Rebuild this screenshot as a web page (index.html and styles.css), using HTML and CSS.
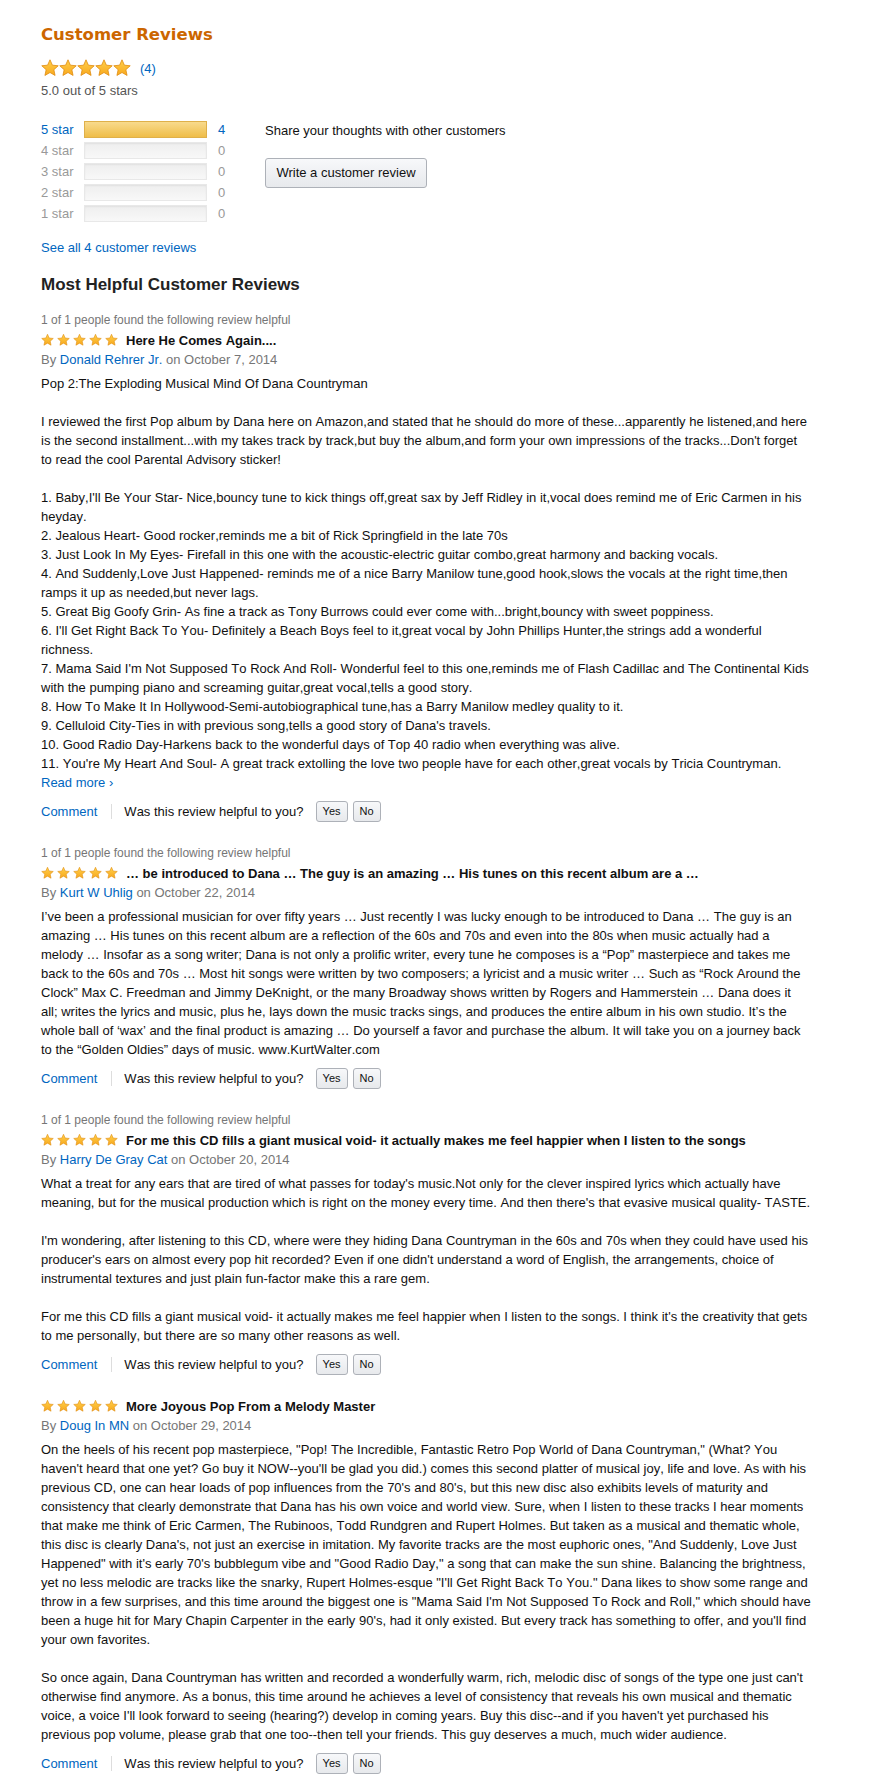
FILE: index.html
```html
<!DOCTYPE html>
<html lang="en">
<head>
  <meta charset="UTF-8">
  <meta name="viewport" content="width=device-width, initial-scale=1.0">
  <title>Customer Reviews</title>
  <link rel="stylesheet" href="styles.css">
</head>
<body>
  <svg class="sprite" xmlns="http://www.w3.org/2000/svg">
    <defs>
      <linearGradient id="star-fill" x1="0" y1="0" x2="0" y2="1">
        <stop offset="0" stop-color="#ffd04a"/>
        <stop offset="1" stop-color="#f8a81e"/>
      </linearGradient>
    </defs>
    <symbol id="star" viewBox="0 0 20 19">
      <path d="M10 0.4 L12.65 6.36 L19.13 7.03 L14.28 11.39 L15.64 17.77 L10 14.5 L4.36 17.77 L5.72 11.39 L0.87 7.03 L7.35 6.36 Z" fill="url(#star-fill)" stroke="#e08c10" stroke-width="0.9" stroke-linejoin="round"/>
    </symbol>
  </svg>

  <div class="page">
    <!-- summary -->
    <h2 class="cr-title">Customer Reviews</h2>
    <div class="avg-stars">
      <svg class="stars-big" viewBox="0 0 90 18">
        <use href="#star" x="0" y="0" width="18" height="18"/>
        <use href="#star" x="18" y="0" width="18" height="18"/>
        <use href="#star" x="36" y="0" width="18" height="18"/>
        <use href="#star" x="54" y="0" width="18" height="18"/>
        <use href="#star" x="72" y="0" width="18" height="18"/>
      </svg>
      <a href="#" class="link">(4)</a>
    </div>
    <div class="avg-text">5.0 out of 5 stars</div>

    <div class="summary">
      <div class="histogram">
        <div class="hist-row">
          <a href="#" class="link hist-label">5 star</a>
          <div class="hist-bar full"></div>
          <a href="#" class="link hist-count">4</a>
        </div>
        <div class="hist-row empty">
          <span class="hist-label">4 star</span>
          <div class="hist-bar"></div>
          <span class="hist-count">0</span>
        </div>
        <div class="hist-row empty">
          <span class="hist-label">3 star</span>
          <div class="hist-bar"></div>
          <span class="hist-count">0</span>
        </div>
        <div class="hist-row empty">
          <span class="hist-label">2 star</span>
          <div class="hist-bar"></div>
          <span class="hist-count">0</span>
        </div>
        <div class="hist-row empty">
          <span class="hist-label">1 star</span>
          <div class="hist-bar"></div>
          <span class="hist-count">0</span>
        </div>
      </div>
      <div class="share">
        <div class="share-text">Share your thoughts with other customers</div>
        <button class="write-btn">Write a customer review</button>
      </div>
    </div>
    <a href="#" class="link see-all">See all 4 customer reviews</a>

    <!-- reviews -->
    <h3 class="reviews-title">Most Helpful Customer Reviews</h3>

    <div class="review">
      <div class="review-helpful">1 of 1 people found the following review helpful</div>
      <div class="review-head">
        <svg class="stars-small" viewBox="0 0 77 12">
          <use href="#star" x="0" width="13" height="12"/>
          <use href="#star" x="16" width="13" height="12"/>
          <use href="#star" x="32" width="13" height="12"/>
          <use href="#star" x="48" width="13" height="12"/>
          <use href="#star" x="64" width="13" height="12"/>
        </svg>
        <span class="review-title">Here He Comes Again....</span>
      </div>
      <div class="review-by">By <a href="#" class="link">Donald Rehrer Jr.</a> on October 7, 2014</div>
      <div class="review-body">Pop 2:The Exploding Musical Mind Of Dana Countryman<br><br>I reviewed the first Pop album by Dana here on Amazon,and stated that he should do more of these...apparently he listened,and here is the second installment...with my takes track by track,but buy the album,and form your own impressions of the tracks...Don't forget to read the cool Parental Advisory sticker!<br><br>1. Baby,I'll Be Your Star- Nice,bouncy tune to kick things off,great sax by Jeff Ridley in it,vocal does remind me of Eric Carmen in his heyday.<br>2. Jealous Heart- Good rocker,reminds me a bit of Rick Springfield in the late 70s<br>3. Just Look In My Eyes- Firefall in this one with the acoustic-electric guitar combo,great harmony and backing vocals.<br>4. And Suddenly,Love Just Happened- reminds me of a nice Barry Manilow tune,good hook,slows the vocals at the right time,then ramps it up as needed,but never lags.<br>5. Great Big Goofy Grin- As fine a track as Tony Burrows could ever come with...bright,bouncy with sweet poppiness.<br>6. I'll Get Right Back To You- Definitely a Beach Boys feel to it,great vocal by John Phillips Hunter,the strings add a wonderful richness.<br>7. Mama Said I'm Not Supposed To Rock And Roll- Wonderful feel to this one,reminds me of Flash Cadillac and The Continental Kids with the pumping piano and screaming guitar,great vocal,tells a good story.<br>8. How To Make It In Hollywood-Semi-autobiographical tune,has a Barry Manilow medley quality to it.<br>9. Celluloid City-Ties in with previous song,tells a good story of Dana's travels.<br>10. Good Radio Day-Harkens back to the wonderful days of Top 40 radio when everything was alive.<br>11. You're My Heart And Soul- A great track extolling the love two people have for each other,great vocals by Tricia Countryman.<br><a href="#" class="link">Read more ›</a></div>
      <div class="review-actions">
        <a href="#" class="link">Comment</a>
        <span class="sep"></span>
        <span>Was this review helpful to you?</span>
        <button class="vote-btn first">Yes</button>
        <button class="vote-btn">No</button>
      </div>
    </div>

    <div class="review">
      <div class="review-helpful">1 of 1 people found the following review helpful</div>
      <div class="review-head">
        <svg class="stars-small" viewBox="0 0 77 12">
          <use href="#star" x="0" width="13" height="12"/>
          <use href="#star" x="16" width="13" height="12"/>
          <use href="#star" x="32" width="13" height="12"/>
          <use href="#star" x="48" width="13" height="12"/>
          <use href="#star" x="64" width="13" height="12"/>
        </svg>
        <span class="review-title">… be introduced to Dana … The guy is an amazing … His tunes on this recent album are a …</span>
      </div>
      <div class="review-by">By <a href="#" class="link">Kurt W Uhlig</a> on October 22, 2014</div>
      <div class="review-body">I’ve been a professional musician for over fifty years … Just recently I was lucky enough to be introduced to Dana … The guy is an amazing … His tunes on this recent album are a reflection of the 60s and 70s and even into the 80s when music actually had a melody … Insofar as a song writer; Dana is not only a prolific writer, every tune he composes is a “Pop” masterpiece and takes me back to the 60s and 70s … Most hit songs were written by two composers; a lyricist and a music writer … Such as “Rock Around the Clock” Max C. Freedman and Jimmy DeKnight, or the many Broadway shows written by Rogers and Hammerstein … Dana does it all; writes the lyrics and music, plus he, lays down the music tracks sings, and produces the entire album in his own studio. It’s the whole ball of ‘wax’ and the final product is amazing … Do yourself a favor and purchase the album. It will take you on a journey back to the “Golden Oldies” days of music. www.KurtWalter.com</div>
      <div class="review-actions">
        <a href="#" class="link">Comment</a>
        <span class="sep"></span>
        <span>Was this review helpful to you?</span>
        <button class="vote-btn first">Yes</button>
        <button class="vote-btn">No</button>
      </div>
    </div>

    <div class="review">
      <div class="review-helpful">1 of 1 people found the following review helpful</div>
      <div class="review-head">
        <svg class="stars-small" viewBox="0 0 77 12">
          <use href="#star" x="0" width="13" height="12"/>
          <use href="#star" x="16" width="13" height="12"/>
          <use href="#star" x="32" width="13" height="12"/>
          <use href="#star" x="48" width="13" height="12"/>
          <use href="#star" x="64" width="13" height="12"/>
        </svg>
        <span class="review-title">For me this CD fills a giant musical void- it actually makes me feel happier when I listen to the songs</span>
      </div>
      <div class="review-by">By <a href="#" class="link">Harry De Gray Cat</a> on October 20, 2014</div>
      <div class="review-body">What a treat for any ears that are tired of what passes for today's music.Not only for the clever inspired lyrics which actually have meaning, but for the musical production which is right on the money every time. And then there's that evasive musical quality- TASTE.<br><br>I'm wondering, after listening to this CD, where were they hiding Dana Countryman in the 60s and 70s when they could have used his producer's ears on almost every pop hit recorded? Even if one didn't understand a word of English, the arrangements, choice of instrumental textures and just plain fun-factor make this a rare gem.<br><br>For me this CD fills a giant musical void- it actually makes me feel happier when I listen to the songs. I think it's the creativity that gets to me personally, but there are so many other reasons as well.</div>
      <div class="review-actions">
        <a href="#" class="link">Comment</a>
        <span class="sep"></span>
        <span>Was this review helpful to you?</span>
        <button class="vote-btn first">Yes</button>
        <button class="vote-btn">No</button>
      </div>
    </div>

    <div class="review">
      <div class="review-head">
        <svg class="stars-small" viewBox="0 0 77 12">
          <use href="#star" x="0" width="13" height="12"/>
          <use href="#star" x="16" width="13" height="12"/>
          <use href="#star" x="32" width="13" height="12"/>
          <use href="#star" x="48" width="13" height="12"/>
          <use href="#star" x="64" width="13" height="12"/>
        </svg>
        <span class="review-title">More Joyous Pop From a Melody Master</span>
      </div>
      <div class="review-by">By <a href="#" class="link">Doug In MN</a> on October 29, 2014</div>
      <div class="review-body">On the heels of his recent pop masterpiece, "Pop! The Incredible, Fantastic Retro Pop World of Dana Countryman," (What? You haven't heard that one yet? Go buy it NOW--you'll be glad you did.) comes this second platter of musical joy, life and love. As with his previous CD, one can hear loads of pop influences from the 70's and 80's, but this new disc also exhibits levels of maturity and consistency that clearly demonstrate that Dana has his own voice and world view. Sure, when I listen to these tracks I hear moments that make me think of Eric Carmen, The Rubinoos, Todd Rundgren and Rupert Holmes. But taken as a musical and thematic whole, this disc is clearly Dana's, not just an exercise in imitation. My favorite tracks are the most euphoric ones, "And Suddenly, Love Just Happened" with it's early 70's bubblegum vibe and "Good Radio Day," a song that can make the sun shine. Balancing the brightness, yet no less melodic are tracks like the snarky, Rupert Holmes-esque "I'll Get Right Back To You." Dana likes to show some range and throw in a few surprises, and this time around the biggest one is "Mama Said I'm Not Supposed To Rock and Roll," which should have been a huge hit for Mary Chapin Carpenter in the early 90's, had it only existed. But every track has something to offer, and you'll find your own favorites.<br><br>So once again, Dana Countryman has written and recorded a wonderfully warm, rich, melodic disc of songs of the type one just can't otherwise find anymore. As a bonus, this time around he achieves a level of consistency that reveals his own musical and thematic voice, a voice I'll look forward to seeing (hearing?) develop in coming years. Buy this disc--and if you haven't yet purchased his previous pop volume, please grab that one too--then tell your friends. This guy deserves a much, much wider audience.</div>
      <div class="review-actions">
        <a href="#" class="link">Comment</a>
        <span class="sep"></span>
        <span>Was this review helpful to you?</span>
        <button class="vote-btn first">Yes</button>
        <button class="vote-btn">No</button>
      </div>
    </div>
  </div>
</body>
</html>
```

FILE: styles.css
```css
body {
  margin: 0;
  font-family: "Liberation Sans", Arial, sans-serif;
  font-size: 13px;
  line-height: 19px;
  font-kerning: none;
  color: #111;
  background: #fff;
}
.sprite {
  display: block;
  width: 0;
  height: 0;
}
.page {
  width: 770px;
  padding: 25px 0 10px 41px;
}
.link {
  color: #0066c0;
  text-decoration: none;
}

/* summary */
.cr-title {
  margin: 0;
  font-family: "DejaVu Sans", Verdana, sans-serif;
  font-size: 16.5px;
  line-height: 20px;
  font-weight: bold;
  color: #cc6600;
}
.avg-stars {
  display: flex;
  align-items: center;
  height: 18px;
  margin-top: 14px;
}
.stars-big {
  width: 90px;
  height: 18px;
}
.avg-stars .link {
  margin-left: 9px;
}
.avg-text {
  margin-top: 6px;
  line-height: 16px;
  color: #555;
}
.summary {
  display: flex;
  margin-top: 20px;
}
.histogram {
  width: 224px;
}
.hist-row {
  display: flex;
  align-items: center;
  height: 21px;
}
.hist-row.empty {
  color: #999;
}
.hist-label {
  width: 43px;
}
.hist-bar {
  width: 123px;
  height: 17px;
  box-sizing: border-box;
  border: 1px solid #e8e8e8;
  background: linear-gradient(#eeeeee, #f8f8f8);
  box-shadow: inset 0 1px 2px rgba(0, 0, 0, 0.06);
}
.hist-bar.full {
  border-color: #dfb04a;
  background: linear-gradient(#f8da8d, #efbd48);
  box-shadow: none;
}
.hist-count {
  margin-left: 11px;
}
.share {
  padding-top: 1.5px;
}
.write-btn {
  display: block;
  margin-top: 18px;
  width: 162px;
  height: 30px;
  padding: 0;
  border: 1px solid #adb1b8;
  border-radius: 3px;
  background: linear-gradient(#f7f8fa, #e7e9ec);
  font-family: inherit;
  font-size: 13px;
  color: #111;
  cursor: pointer;
}
.see-all {
  display: block;
  margin-top: 13.5px;
}

/* reviews */
.reviews-title {
  margin: 17px 0 0;
  font-size: 17px;
  line-height: 22px;
  font-weight: bold;
  color: #222;
}
.review {
  margin-top: 21px;
}
.reviews-title + .review {
  margin-top: 14.5px;
}
.review-helpful {
  font-size: 12px;
  line-height: 20px;
  color: #767676;
}
.review-head {
  display: flex;
  align-items: center;
  gap: 8px;
  height: 20px;
}
.stars-small {
  width: 77px;
  height: 12px;
  flex-shrink: 0;
}
.review-title {
  font-weight: bold;
  white-space: nowrap;
}
.review-by {
  line-height: 20px;
  color: #767676;
}
.review-body {
  margin-top: 3.5px;
}
.review-actions {
  display: flex;
  align-items: center;
  height: 22px;
  margin-top: 8.5px;
}
.sep {
  width: 1px;
  height: 15px;
  background: #ddd;
  margin: 0 12px 0 14px;
}
.vote-btn {
  height: 21px;
  padding: 0 6px;
  margin-left: 5px;
  border: 1px solid #adb1b8;
  border-radius: 3px;
  background: linear-gradient(#f7f8fa, #e7e9ec);
  font-family: inherit;
  font-size: 11px;
  color: #111;
  cursor: pointer;
}
.vote-btn.first {
  margin-left: 12px;
}
```
